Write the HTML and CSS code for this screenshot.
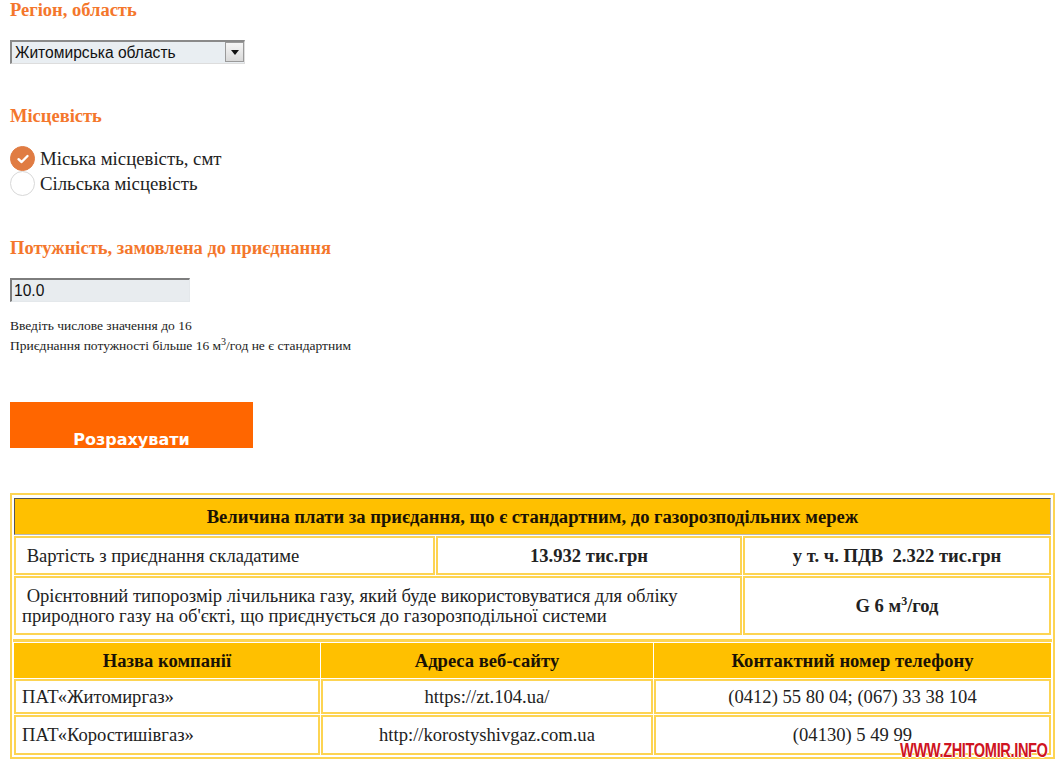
FILE: index.html
```html
<!DOCTYPE html>
<html lang="uk">
<head>
    <meta charset="UTF-8">
    <title>Калькулятор приєднання</title>
    <link rel="stylesheet" href="styles.css">
</head>
<body>

    <div class="calc">
        <h3 class="field-title">Регіон, область</h3>
        <div class="select-wrap">
            <select class="region">
                <option>Житомирська область</option>
            </select>
            <span class="select-arrow"></span>
        </div>

        <h3 class="field-title gap-top">Місцевість</h3>
        <div class="radio-group">
            <label class="radio-row">
                <span class="radio checked">
                    <svg width="14" height="14" viewBox="0 0 14 14"><path d="M2.5 7.2 L5.6 10 L11.5 4" fill="none" stroke="#fff" stroke-width="2.4" stroke-linecap="round" stroke-linejoin="round"/></svg>
                </span>
                Міська місцевість, смт
            </label>
            <label class="radio-row">
                <span class="radio"></span>
                Сільська місцевість
            </label>
        </div>

        <h3 class="field-title gap-top">Потужність, замовлена до приєднання</h3>
        <input class="power" type="text" value="10.0">
        <div class="hint">
            <div>Введіть числове значення до 16</div>
            <div>Приєднання потужності більше 16 м<sup>3</sup>/год не є стандартним</div>
        </div>

        <div class="calc-btn">Розрахувати</div>
    </div>

    <div class="result">
        <table class="tbl tbl-price">
            <tr>
                <th class="main-head" colspan="3">Величина плати за приєдання, що є стандартним, до газорозподільних мереж</th>
            </tr>
            <tr>
                <td class="c1">&nbsp;Вартість з приєднання складатиме</td>
                <td class="c2 strong">13.932 тис.грн</td>
                <td class="c3 strong">у т. ч. ПДВ &nbsp;2.322 тис.грн</td>
            </tr>
            <tr>
                <td class="tall" colspan="2">&nbsp;Орієнтовний типорозмір лічильника газу, який буде використовуватися для обліку<br>природного газу на об'єкті, що приєднується до газорозподільної системи</td>
                <td class="strong">G 6 м<sup>3</sup>/год</td>
            </tr>
        </table>

        <table class="tbl tbl-companies">
            <tr>
                <th class="k1">Назва компанії</th>
                <th class="k2">Адреса веб-сайту</th>
                <th class="k3">Контактний номер телефону</th>
            </tr>
            <tr>
                <td>ПАТ«Житомиргаз»</td>
                <td class="center">https://zt.104.ua/</td>
                <td class="center">(0412) 55 80 04; (067) 33 38 104</td>
            </tr>
            <tr>
                <td class="last">ПАТ«Коростишівгаз»</td>
                <td class="center last">http://korostyshivgaz.com.ua</td>
                <td class="center last">(04130) 5 49 99</td>
            </tr>
        </table>
    </div>

    <div class="watermark">WWW.ZHITOMIR.INFO</div>

</body>
</html>
```

FILE: styles.css
```css
body {
    margin: 0;
    font-family: 'Liberation Serif', 'Times New Roman', serif;
    color: #222;
    background: #fff;
    position: relative;
    min-height: 768px;
}

.calc {
    padding-left: 10px;
}

/* заголовки полів */
.field-title {
    margin: 0;
    font-size: 18.5px;
    line-height: 20px;
    font-weight: bold;
    color: #f4772c;
}

.gap-top {
    margin-top: 42px;
}

.select-wrap {
    position: relative;
    width: 235px;
    height: 24px;
    margin-top: 20px;
}

.region {
    appearance: none;
    -webkit-appearance: none;
    width: 235px;
    height: 24px;
    box-sizing: border-box;
    margin: 0;
    padding: 0 0 0 3px;
    border: 1px solid #ddd;
    border-top: 2px solid #8a8a8a;
    border-left: 2px solid #8a8a8a;
    border-radius: 0;
    background: #e9eef2;
    font-family: 'Liberation Sans', Arial, sans-serif;
    font-size: 15.6px;
    color: #111;
}

.select-arrow {
    position: absolute;
    right: 1px;
    top: 2px;
    width: 19px;
    height: 20px;
    box-sizing: border-box;
    border: 1px solid #9a9a9a;
    background: linear-gradient(#f6f6f6, #d9d9d9);
}

.select-arrow::after {
    content: "";
    position: absolute;
    left: 5px;
    top: 7px;
    border-left: 4px solid transparent;
    border-right: 4px solid transparent;
    border-top: 5px solid #111;
}

.radio-group {
    margin-top: 20px;
}

.radio-row {
    display: flex;
    align-items: center;
    height: 25px;
    font-size: 18.8px;
}

.radio {
    width: 25px;
    height: 25px;
    box-sizing: border-box;
    border: 1px solid #d8d8d8;
    border-radius: 50%;
    background: #fff;
    margin-right: 5px;
    display: flex;
    align-items: center;
    justify-content: center;
}

.radio.checked {
    border-color: #e07c43;
    background: #e07c43;
}

.power {
    display: block;
    width: 180px;
    height: 24px;
    box-sizing: border-box;
    margin: 20px 0 0 0;
    padding: 0 0 0 2px;
    border: 1px solid #e4e8eb;
    border-top: 2px solid #7d7d7d;
    border-left: 2px solid #7d7d7d;
    background: #e8ecef;
    font-family: 'Liberation Sans', Arial, sans-serif;
    font-size: 15.6px;
    color: #111;
}

.hint {
    margin-top: 14px;
    font-size: 13.5px;
    line-height: 20px;
}

.hint sup {
    font-size: 10px;
    line-height: 0;
}

.calc-btn {
    margin-top: 46px;
    width: 243px;
    height: 46px;
    box-sizing: border-box;
    padding-top: 28px;
    overflow: hidden;
    background: #ff6600;
    color: #fff;
    text-align: center;
    font-family: 'DejaVu Sans', Verdana, sans-serif;
    font-weight: bold;
    font-size: 16px;
    line-height: 20px;
}

/* таблиці результату */
.result {
    margin: 45px 0 0 10px;
    width: 1045px;
    box-sizing: border-box;
    border: 2px solid #fdd452;
    padding: 2px 1px 1px 1px;
}

.tbl {
    width: 100%;
    border-collapse: separate;
    border-spacing: 1px;
    font-size: 18.6px;
}

.tbl td {
    border: 2px solid #fdd452;
    padding: 0 6px;
    background: #fff;
}

.tbl-price tr:nth-child(2) td {
    height: 35px;
}

.tbl-price .c1 {
    width: 405px;
}

.tbl-price .c2 {
    width: 290px;
}

.tbl .tall {
    height: 55px;
    line-height: 20px;
}

.strong {
    font-weight: bold;
    text-align: center;
}

.strong sup {
    font-size: 12px;
    line-height: 0;
}

.main-head {
    height: 35px;
    padding: 0;
    background: #ffc000;
    border: 1px solid;
    border-color: #555 #b8b8b8 #b8b8b8 #555;
    font-weight: bold;
    color: #1a1205;
}

.tbl-companies {
    border-top: 3px solid #fdd452;
    margin-top: 3px;
}

.tbl-companies th {
    height: 29px;
    background: #ffc000;
    border: 2px solid #ffc000;
    font-weight: bold;
    color: #1a1205;
}

.tbl-companies td {
    height: 31px;
}

.tbl-companies td.last {
    height: 36px;
}

.tbl-companies .k1 {
    width: 300px;
}

.tbl-companies .k2 {
    width: 326px;
}

.center {
    text-align: center;
}

.watermark {
    position: absolute;
    left: 900px;
    top: 739px;
    font-family: 'Liberation Sans', Arial, sans-serif;
    font-weight: bold;
    font-size: 20px;
    letter-spacing: -0.5px;
    color: #cf1422;
    transform: scaleX(0.73);
    transform-origin: left top;
    text-shadow: 1px 0 #fff, -1px 0 #fff, 0 1px #fff, 0 -1px #fff;
}
```
